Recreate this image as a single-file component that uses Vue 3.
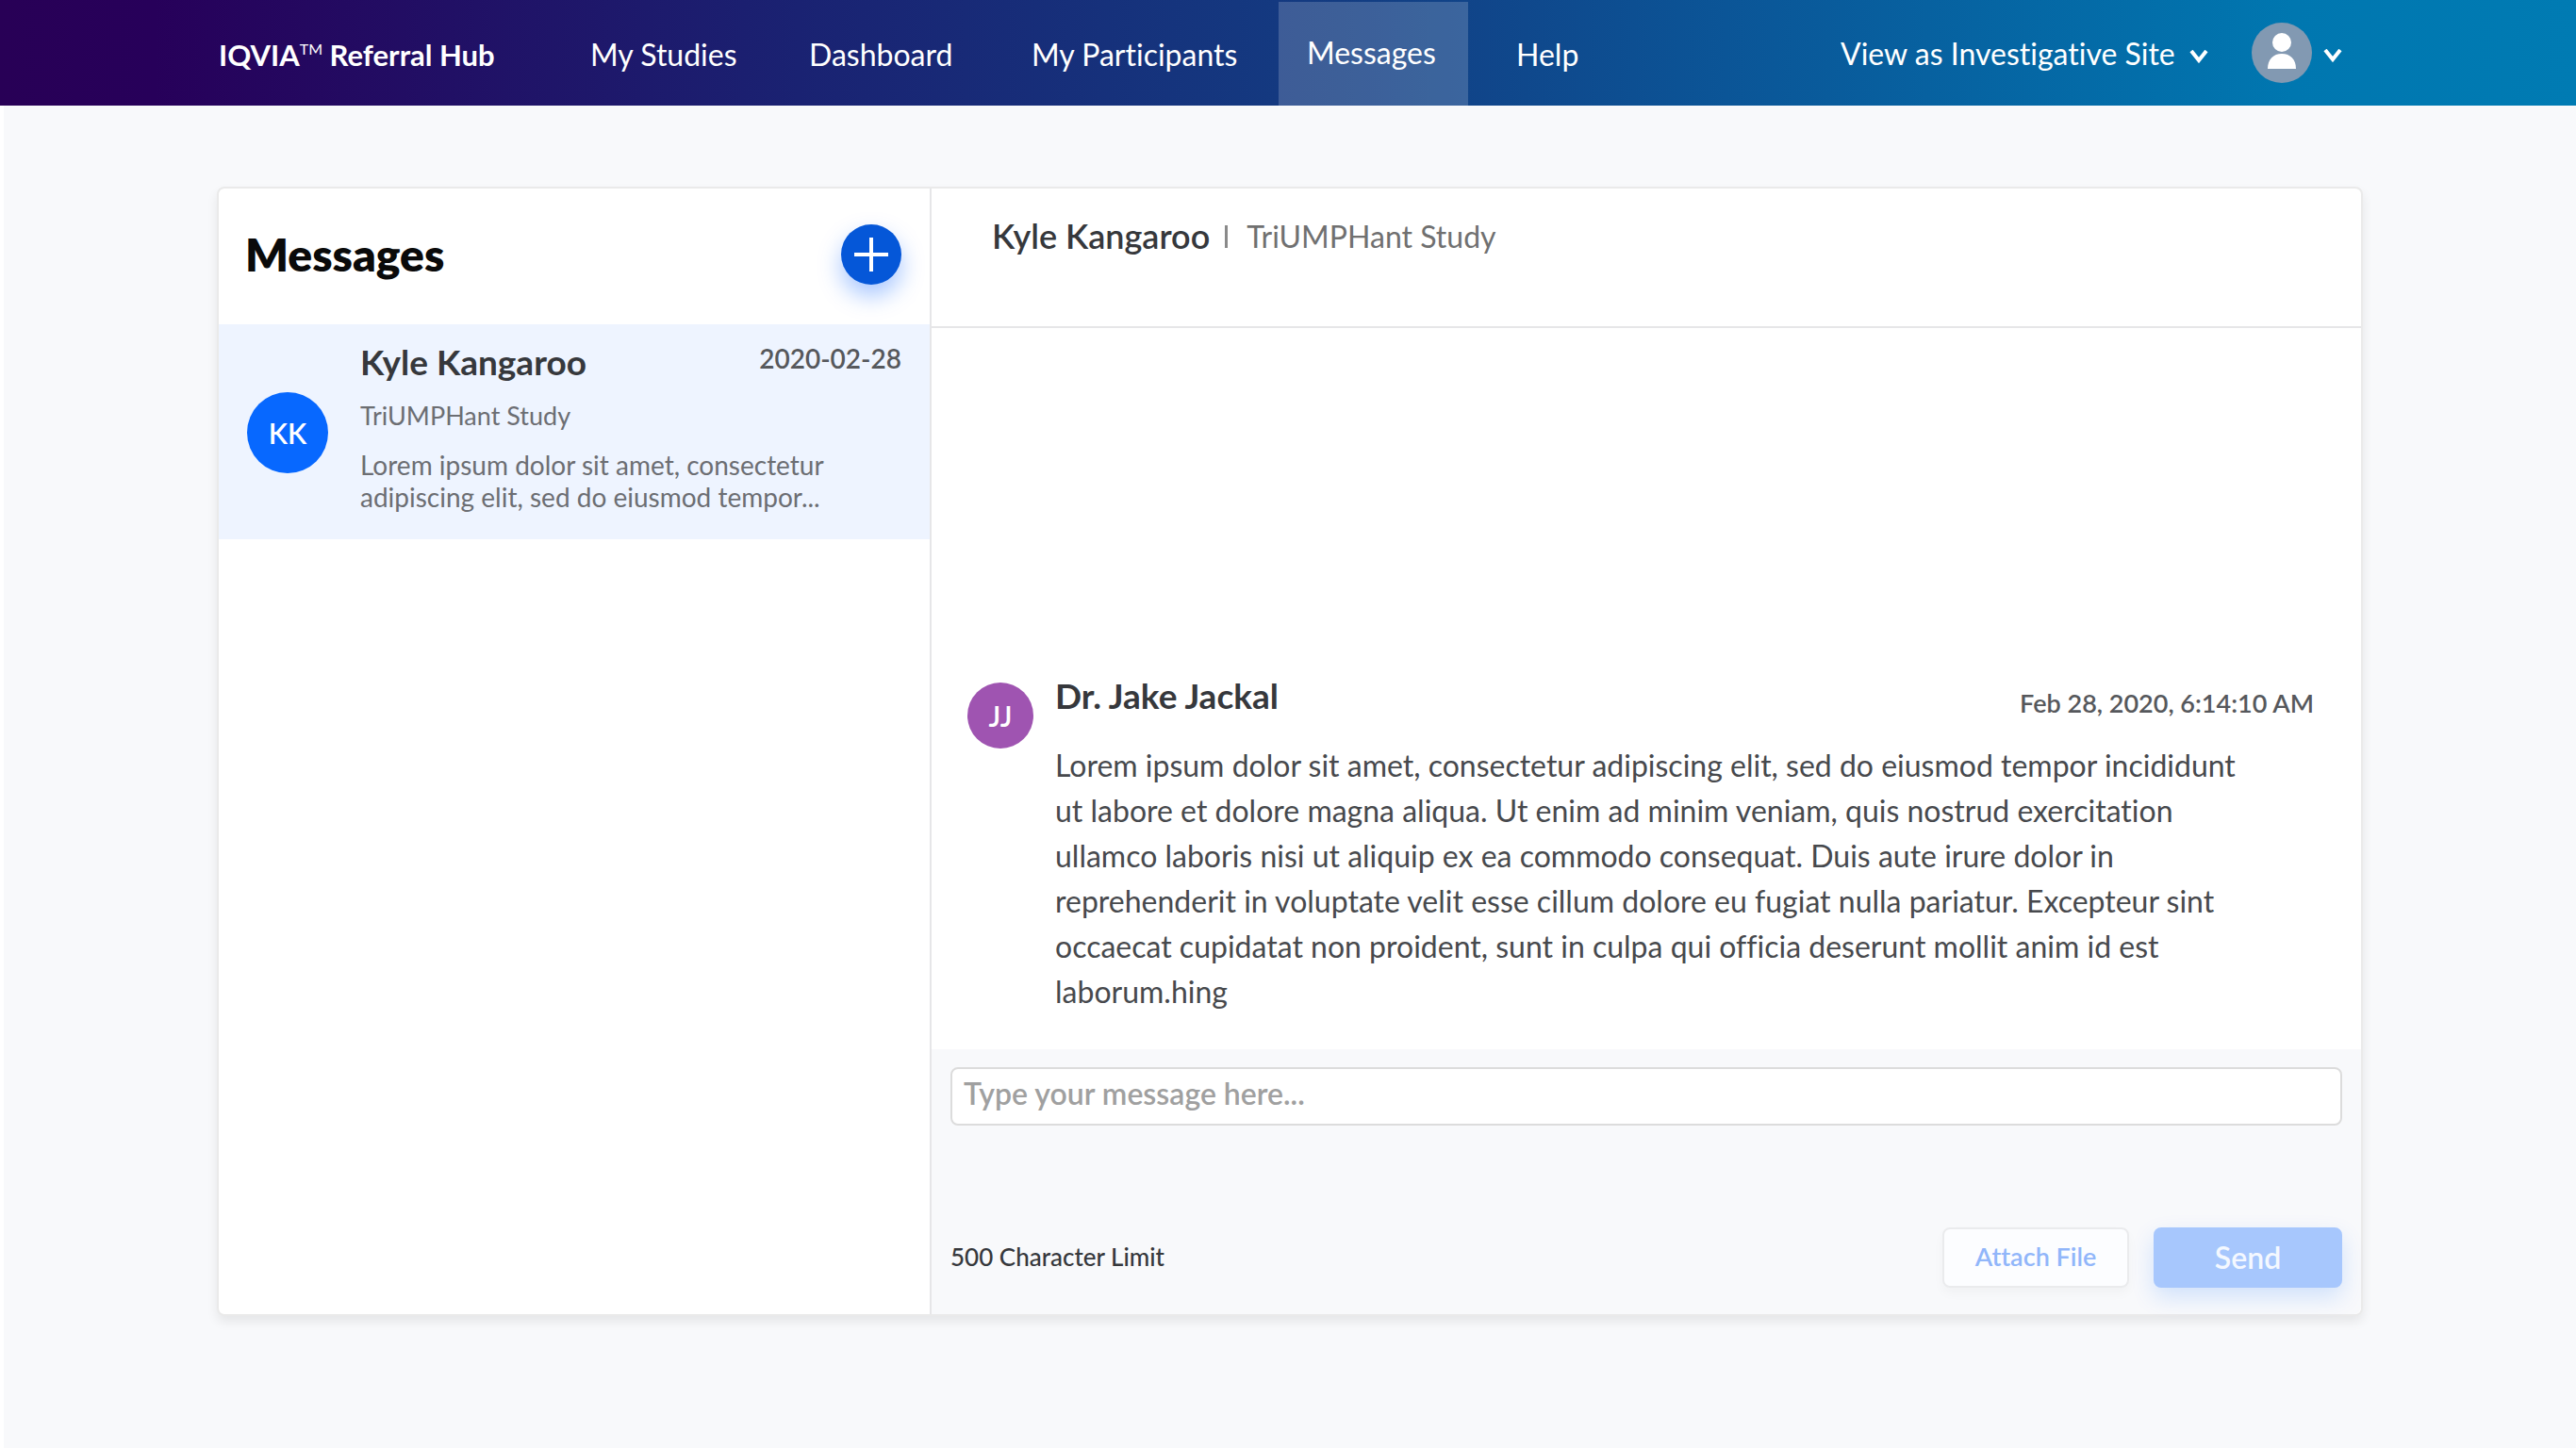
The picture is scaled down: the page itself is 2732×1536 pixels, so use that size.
<script setup>
import { ref } from 'vue'

const links = [
  { label: 'My Studies', left: 'studies' },
  { label: 'Dashboard', left: 'dashboard' },
  { label: 'My Participants', left: 'participants' },
  { label: 'Messages', left: 'messages', active: true },
  { label: 'Help', left: 'help' },
]

const view = ref('site')
const draft = ref('')

const body = [
  'Lorem ipsum dolor sit amet, consectetur adipiscing elit, sed do eiusmod tempor incididunt',
  'ut labore et dolore magna aliqua. Ut enim ad minim veniam, quis nostrud exercitation',
  'ullamco laboris nisi ut aliquip ex ea commodo consequat. Duis aute irure dolor in',
  'reprehenderit in voluptate velit esse cillum dolore eu fugiat nulla pariatur. Excepteur sint',
  'occaecat cupidatat non proident, sunt in culpa qui officia deserunt mollit anim id est',
  'laborum.hing',
].join('\n')

const preview = [
  'Lorem ipsum dolor sit amet, consectetur',
  'adipiscing elit, sed do eiusmod tempor...',
].join('\n')
</script>

<template>
  <div class="page">
    <header class="topbar">
      <a class="brand" href="#">IQVIA<span class="tm">TM</span> Referral Hub</a>
      <nav class="nav" aria-label="Main">
        <a
          v-for="link in links"
          :key="link.label"
          href="#"
          class="nav-link"
          :class="[link.left, { active: link.active }]"
        >{{ link.label }}</a>
      </nav>
      <div class="account">
        <label class="view">
          <select v-model="view" class="view-select" aria-label="View as">
            <option value="site">View as Investigative Site</option>
          </select>
          <svg class="chevron" viewBox="0 0 20 14" aria-hidden="true">
            <path d="M2 1 L10 11 L18 1" />
          </svg>
        </label>
        <button class="profile" type="button" aria-label="Account menu">
          <svg class="avatar" viewBox="0 0 64 64" aria-hidden="true">
            <circle cx="32" cy="32" r="32" fill="#8299b2" />
            <circle cx="32" cy="21" r="10" fill="#fff" />
            <path d="M17 49 C17 39 23 33 32 33 C41 33 47 39 47 49 Z" fill="#fff" />
          </svg>
          <svg class="chevron" viewBox="0 0 20 14" aria-hidden="true">
            <path d="M2 1 L10 11 L18 1" />
          </svg>
        </button>
      </div>
    </header>

    <main class="content">
      <div class="card">
        <aside class="threads">
          <div class="threads-head">
            <h1>Messages</h1>
            <button class="compose" type="button" aria-label="New message">
              <svg viewBox="0 0 36 36" aria-hidden="true">
                <path d="M18 0 V36 M0 18 H36" />
              </svg>
            </button>
          </div>
          <a class="thread" href="#">
            <span class="badge blue">KK</span>
            <span class="thread-text">
              <span class="thread-top">
                <strong class="name">Kyle Kangaroo</strong>
                <time class="date" datetime="2020-02-28">2020-02-28</time>
              </span>
              <span class="study">TriUMPHant Study</span>
              <span class="preview">{{ preview }}</span>
            </span>
          </a>
        </aside>

        <section class="chat">
          <div class="chat-head">
            <h2>Kyle Kangaroo</h2>
            <span class="bar"></span>
            <span class="chat-study">TriUMPHant Study</span>
          </div>
          <div class="history">
            <article class="message">
              <span class="badge purple">JJ</span>
              <div class="message-text">
                <div class="message-top">
                  <strong class="name">Dr. Jake Jackal</strong>
                  <time class="date" datetime="2020-02-28T06:14:10">Feb 28, 2020, 6:14:10 AM</time>
                </div>
                <p class="body">{{ body }}</p>
              </div>
            </article>
          </div>
          <form class="composer" @submit.prevent>
            <input
              v-model="draft"
              class="field"
              type="text"
              maxlength="500"
              aria-label="Message"
              placeholder="Type your message here..."
            />
            <div class="actions">
              <span class="limit">500 Character Limit</span>
              <button class="attach" type="button">Attach File</button>
              <button class="send" type="submit">Send</button>
            </div>
          </form>
        </section>
      </div>
    </main>
  </div>
</template>

<style>
body {
  margin: 0;
  background: #f8f9fb;
}
</style>

<style scoped>
.page,
.page * {
  box-sizing: border-box;
}

.page {
  min-height: 100vh;
  display: flex;
  flex-direction: column;
  font-family: Lato, "Liberation Sans", sans-serif;
  font-size: 32px;
  font-variant-ligatures: none;
  color: #36383c;
}

button,
input,
select {
  font-family: inherit;
  font-variant-ligatures: none;
}

a {
  color: inherit;
  text-decoration: none;
}

.topbar {
  display: flex;
  height: 112px;
  padding: 2px 248px 0 232px;
  color: #fff;
  line-height: 112px;
  white-space: nowrap;
  background: linear-gradient(90deg, #280056 0%, #27005a 6%, #1a2272 31%, #133c82 52%, #0b5597 67%, #0077b0 89%, #007bb3 100%);
}

.brand {
  width: 364px;
  font-weight: 700;
  font-size: 31px;
}

.tm {
  font-size: 16px;
  font-weight: 400;
  vertical-align: 12px;
  line-height: 1;
}

.nav {
  display: flex;
}

.nav-link {
  padding: 0 30px;
}

.studies {
  width: 232px;
}

.dashboard {
  width: 236px;
}

.participants {
  width: 292px;
}

.messages {
  width: 201px;
}

.help {
  margin-left: 21px;
}

.nav-link.active {
  background: rgba(255, 255, 255, 0.18);
  line-height: 108px;
}

.account {
  display: flex;
  align-items: center;
  gap: 46px;
  margin-left: auto;
}

.view {
  display: flex;
  align-items: center;
  gap: 14px;
}

.view-select {
  appearance: none;
  padding: 0;
  border: 0;
  background: none;
  color: #fff;
  font-size: 32px;
  line-height: 40px;
}

.chevron {
  width: 20px;
  height: 14px;
  margin-top: 6px;
  fill: none;
  stroke: #fff;
  stroke-width: 4;
}

.profile {
  display: flex;
  align-items: center;
  gap: 12px;
  padding: 0 0 2px;
  border: 0;
  background: none;
}

.avatar {
  width: 64px;
  height: 64px;
}

.content {
  flex: 1;
  padding: 86px 226px 60px;
  border-left: 4px solid #fff;
  background: #f8f9fb;
}

.card {
  display: flex;
  border: 2px solid #eaeaea;
  border-radius: 8px;
  background: #fff;
  box-shadow: 0 6px 12px rgba(0, 0, 0, 0.08);
}

.threads {
  flex: 0 0 756px;
  border-right: 2px solid #e6e6e8;
}

.threads-head {
  display: flex;
  align-items: center;
  justify-content: space-between;
  height: 144px;
  padding: 0 30px 4px 28px;
}

h1,
h2,
p {
  margin: 0;
}

h1 {
  color: #0a0a0a;
  font-size: 48px;
  font-weight: 800;
  line-height: 56px;
}

.compose {
  display: grid;
  place-items: center;
  width: 64px;
  height: 64px;
  padding: 0;
  border: 0;
  border-radius: 50%;
  background: #0557d8;
  box-shadow: 0 12px 24px rgba(5, 95, 255, 0.35);
}

.compose svg {
  width: 36px;
  height: 36px;
  stroke: #fff;
  stroke-width: 4;
}

.thread {
  display: flex;
  align-items: flex-start;
  gap: 34px;
  height: 228px;
  padding: 16px 30px;
  background: #eef4ff;
}

.badge {
  display: grid;
  flex: none;
  place-items: center;
  border-radius: 50%;
  color: #fff;
  font-size: 30px;
  font-weight: 600;
}

.badge.blue {
  width: 86px;
  height: 86px;
  margin-top: 56px;
  background: #0768ff;
}

.badge.purple {
  width: 70px;
  height: 70px;
  background: #9f54b1;
}

.thread-text {
  display: flex;
  flex: 1;
  flex-direction: column;
}

.thread-top,
.message-top {
  display: flex;
  justify-content: space-between;
}

.name {
  font-size: 37px;
  font-weight: 700;
  line-height: 48px;
}

.date {
  color: #56585c;
  font-size: 27px;
  font-weight: 600;
  line-height: 36px;
}

.thread .date {
  font-size: 28px;
  line-height: 40px;
}

.study,
.preview {
  color: #6c6e73;
  font-size: 28px;
  line-height: 34px;
}

.study {
  margin: 16px 0 18px;
  font-size: 27px;
}

.preview {
  white-space: pre-line;
}

.chat {
  display: flex;
  flex: 1;
  flex-direction: column;
}

.chat-head {
  display: flex;
  align-items: flex-start;
  height: 148px;
  padding: 28px 64px;
  border-bottom: 2px solid #e6e6e8;
}

h2 {
  font-size: 36px;
  font-weight: 600;
  line-height: 44px;
}

.bar {
  width: 3px;
  height: 24px;
  margin: 11px 20px 0 16px;
  background: #8a8a8a;
}

.chat-study {
  color: #707070;
  font-size: 32px;
  line-height: 46px;
}

.history {
  display: flex;
  flex-direction: column;
  justify-content: flex-end;
  min-height: 765px;
  padding: 0 50px 37px 38px;
}

.message {
  display: flex;
  gap: 23px;
}

.message .badge {
  margin-top: 10px;
}

.message-text {
  flex: 1;
}

.message-top .date {
  margin-top: 14px;
}

.body {
  margin-top: 24px;
  color: #47494d;
  font-size: 32px;
  line-height: 48px;
  white-space: pre-line;
}

.composer {
  flex: 1;
  padding: 19px 20px 28px;
  background: #f8f9fb;
  border-radius: 0 0 8px 0;
}

.field {
  display: block;
  width: 100%;
  height: 62px;
  padding: 0 12px 8px;
  border: 2px solid #dcdcdc;
  border-radius: 8px;
  background: #fff;
  font-size: 32px;
  font-weight: 600;
}

.field::placeholder {
  color: #a0a0a0;
  opacity: 1;
}

.actions {
  display: flex;
  align-items: center;
  gap: 26px;
  margin-top: 108px;
}

.limit {
  margin-right: auto;
  padding-bottom: 2px;
  font-size: 26px;
  font-weight: 500;
}

.attach,
.send {
  height: 64px;
  border-radius: 8px;
}

.attach {
  width: 198px;
  padding: 0 0 4px;
  border: 2px solid #eaebed;
  background: #fcfdff;
  color: #91b6fa;
  font-size: 27px;
  font-weight: 600;
  box-shadow: 0 6px 12px rgba(0, 0, 0, 0.03);
}

.send {
  width: 200px;
  padding: 0 0 2px;
  border: 0;
  background: #a7c7fd;
  color: #f4f8ff;
  font-size: 32px;
  font-weight: 600;
  box-shadow: 0 10px 24px rgba(7, 104, 255, 0.16);
}
</style>
